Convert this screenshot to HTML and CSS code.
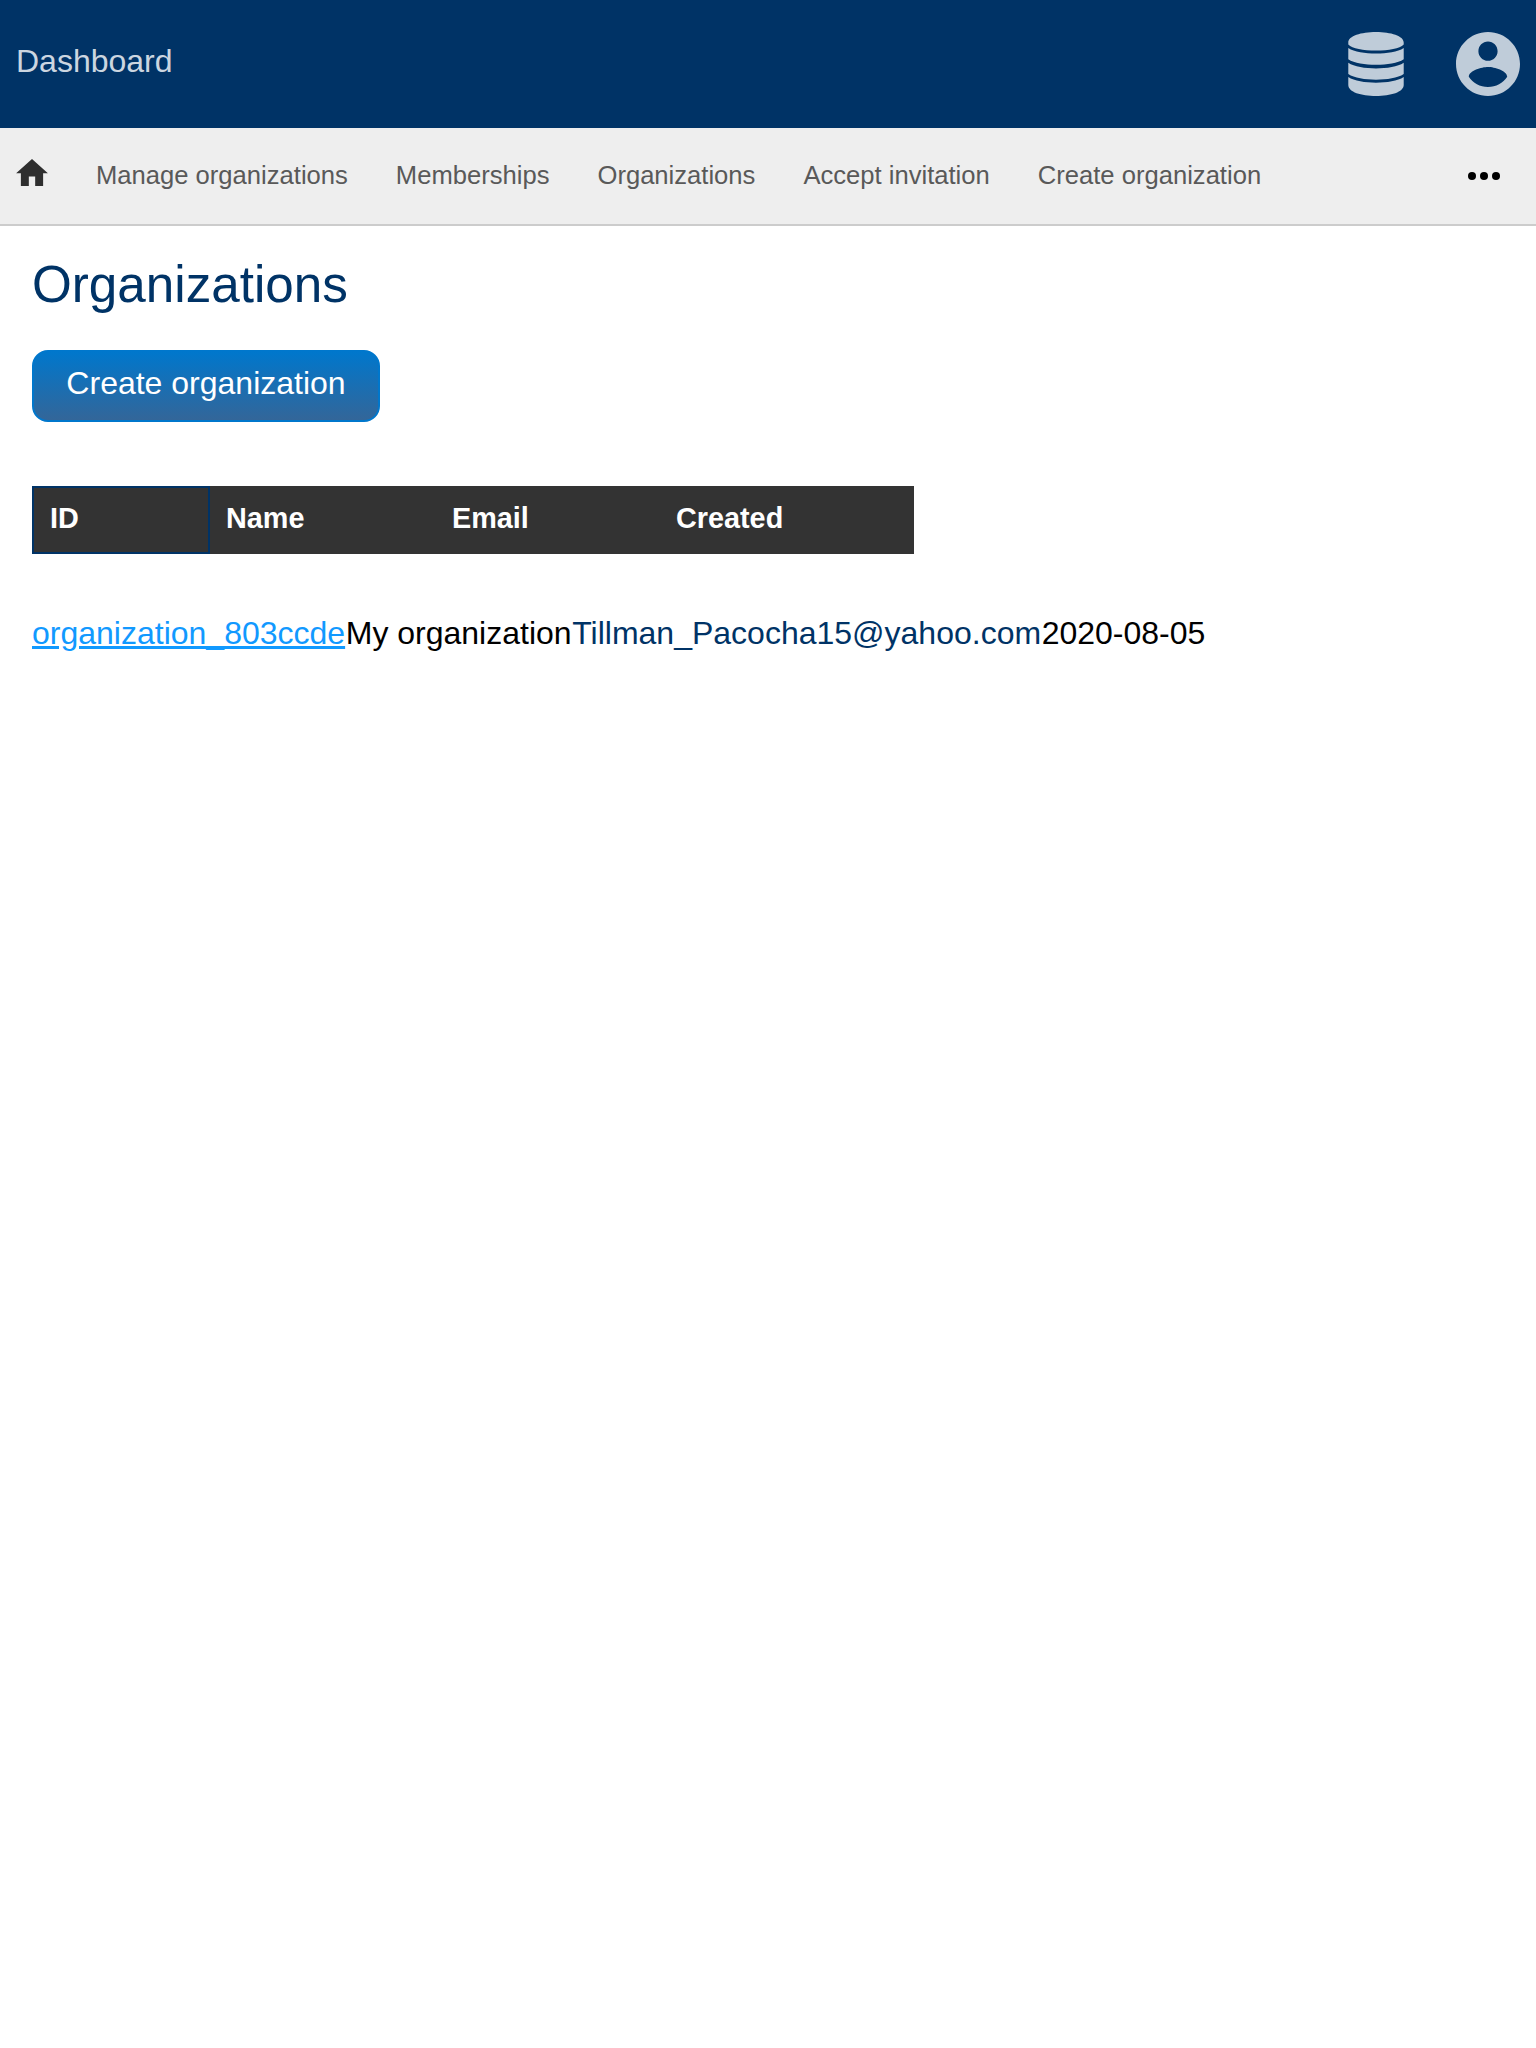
FILE: index.html
```html
<!DOCTYPE html>
<html lang="en">
<head>
<meta charset="utf-8">
<title>Organizations</title>
<link rel="stylesheet" href="styles.css">
</head>
<body>
<header class="topbar">
  <a class="brand">Dashboard</a>
  <div class="topbar-icons">
    <svg class="icon-db" viewBox="-0.3 0 56.6 64" preserveAspectRatio="none"><path d="M0 10.500C0 4 13 0 28 0s28 4 28 10.500v2c-4 4-15 6-28 6S4 16.500 0 12.500zM0 16c6 4 17 5.500 28 5.500s22-1.500 28-5.500v11.300C50 31.300 39 32.800 28 32.800S6 31.300 0 27.300zM0 30.700c6 4 17 5.700 28 5.700s22-1.700 28-5.700v11.300C50 46 39 47.700 28 47.700S6 46 0 42zM0 45c6 4 17 5.700 28 5.700s22-1.700 28-5.700v8c0 7-13 11-28 11S0 60 0 53z"/></svg>
    <svg class="icon-user" viewBox="2 2 20 20"><path d="M12 2C6.480 2 2 6.480 2 12s4.480 10 10 10 10-4.480 10-10S17.520 2 12 2zm0 3c1.660 0 3 1.340 3 3s-1.340 3-3 3-3-1.340-3-3 1.340-3 3-3zm0 14.200c-2.500 0-4.710-1.280-6-3.220.030-1.990 4-3.080 6-3.080 1.990 0 5.970 1.090 6 3.080-1.290 1.940-3.500 3.220-6 3.220z"/></svg>
  </div>
</header>
<nav class="navbar">
  <svg class="icon-home" viewBox="2 3 20 17"><path d="M10 20v-6h4v6h5v-8h3L12 3 2 12h3v8z"/></svg>
  <a>Manage organizations</a>
  <a>Memberships</a>
  <a>Organizations</a>
  <a>Accept invitation</a>
  <a>Create organization</a>
  <svg class="icon-more" viewBox="0 0 32 8"><circle cx="4" cy="4" r="4"/><circle cx="16" cy="4" r="4"/><circle cx="28" cy="4" r="4"/></svg>
</nav>
<main class="content">
  <h1>Organizations</h1>
  <button class="primary">Create organization</button>
  <div class="table-head">
    <span class="col-id">ID</span><span class="col-name">Name</span><span class="col-email">Email</span><span class="col-created">Created</span>
  </div>
  <div class="record"><a class="record-link" href="#">organization_803ccde</a><span>My organization</span><span class="email">Tillman_Pacocha15@yahoo.com</span><span>2020-08-05</span></div>
</main>
</body>
</html>
```
FILE: styles.css
```css
* { box-sizing: border-box; }
body {
  margin: 0;
  background: #fff;
  color: #000;
  font-family: "Liberation Sans", Arial, sans-serif;
  font-size: 32px;
  line-height: 36px;
}
svg { display: block; flex: none; }
.topbar {
  display: flex;
  justify-content: space-between;
  height: 128px;
  padding: 32px 16px;
  background: #003366;
  color: #ccd6e0;
}
.brand { padding-top: 11px; }
.topbar-icons { display: flex; gap: 52px; fill: #bfccd9; }
.icon-db { width: 56px; height: 64px; }
.icon-user { width: 64px; height: 64px; }
.navbar {
  display: flex;
  align-items: center;
  gap: 48px;
  height: 98px;
  padding: 0 36px 0 16px;
  background: #eee;
  border-bottom: 2px solid #ccc;
  color: #595959;
  font-size: 25.6px;
  line-height: 30px;
  white-space: nowrap;
}
.navbar a { padding-bottom: 2px; }
.icon-home { width: 32px; height: 27px; margin-bottom: 8px; fill: #2e2e2e; }
.icon-more { width: 32px; height: 8px; margin-left: auto; }
.content { padding: 29px 32px; }
h1 {
  margin: 0;
  color: #003366;
  font-size: 51.2px;
  font-weight: 400;
  line-height: 60px;
}
.primary {
  display: block;
  width: 348px;
  height: 72px;
  margin: 35px 0 64px;
  padding: 0 0 6px;
  border: 2px solid #0077cc;
  border-radius: 16px;
  background: linear-gradient(#0077cc, #336699);
  color: #fff;
  font: inherit;
}
.table-head {
  display: flex;
  width: 882px;
  height: 68px;
  background: #333;
  color: #fff;
  font-size: 28.8px;
  font-weight: 700;
  line-height: 34px;
}
.table-head span { padding: 15px 16px 0; }
.table-head .col-id { width: 178px; padding-top: 13px; border: 2px solid #003366; }
.col-name { width: 226px; }
.col-email { width: 224px; }
.col-created { flex: 1; }
.record { display: flex; gap: 0.6px; margin-top: 61px; }
.record-link { color: #1199ff; }
.email { color: #003366; }
```
